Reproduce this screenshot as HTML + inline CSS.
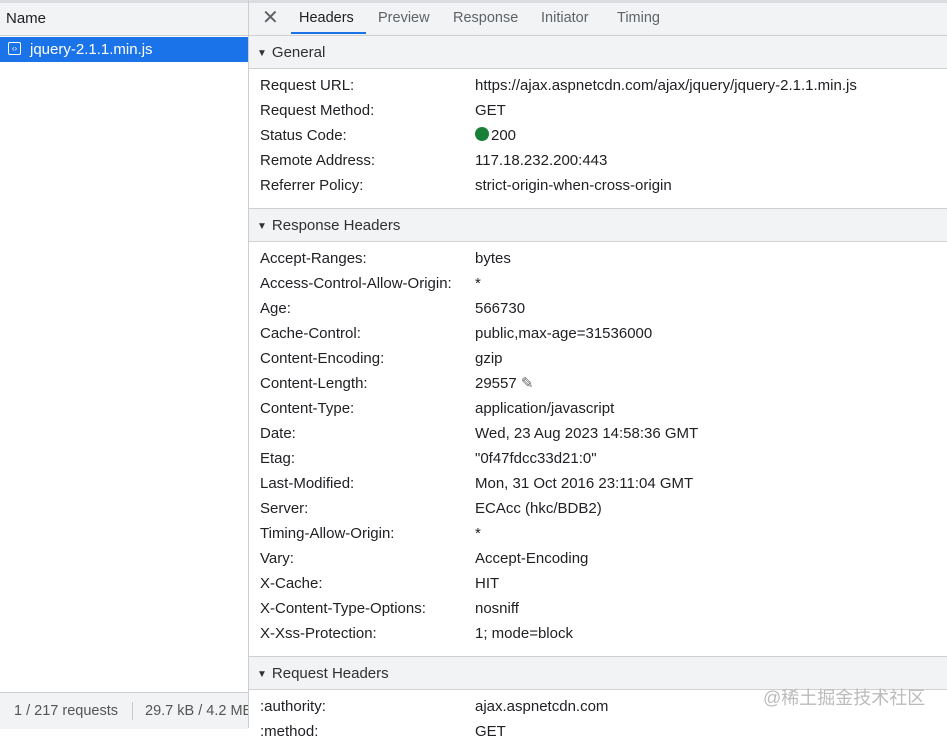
<!DOCTYPE html><html><head><style>
body{margin:0;width:947px;height:728px;overflow:hidden;font-family:"Liberation Sans",sans-serif;font-size:15px;color:#202124;background:#fff;position:relative}
.a{position:absolute}
.row{position:absolute;left:260px;height:25px;line-height:29px;white-space:nowrap}
.row span{position:absolute;left:215px}
.sec{position:absolute;left:249px;right:0;height:32px;background:#f1f3f4;border-top:1px solid #d0d0d0;border-bottom:1px solid #d0d0d0;line-height:33px;padding-left:8px;color:#303030}
.sec:before{content:"▼";font-size:10px;margin-right:5px;vertical-align:1px}
</style></head><body>
<div class="a" style="left:0;top:0;width:947px;height:3px;background:#dadce0"></div>
<div class="a" style="left:0;top:3px;width:248px;height:33px;background:#f1f3f4;border-bottom:1px solid #cbcdd1;line-height:32px;padding-left:6px;box-sizing:border-box;font-size:15px">Name</div>
<div class="a" style="left:0;top:37px;width:248px;height:25px;background:#1a73e8;color:#fff;line-height:25px;font-size:15px">
<span style="position:absolute;left:8px;top:5px;width:11px;height:11px;border:1.5px solid #fff;border-radius:2px;font-size:8px;line-height:11px;text-align:center">‹›</span>
<span style="position:absolute;left:30px">jquery-2.1.1.min.js</span></div>
<div class="a" style="left:248px;top:0;width:1px;height:728px;background:#cbcdd1"></div>
<div class="a" style="left:0;top:692px;width:248px;height:36px;border-top:1px solid #cbcdd1;background:#f1f3f4;line-height:36px;color:#555;font-size:14.5px;white-space:nowrap;overflow:hidden"><span style="margin-left:14px">1 / 217 requests</span><span style="display:inline-block;width:1px;height:18px;background:#ccc;vertical-align:middle;margin:0 12px 0 14px"></span>29.7 kB / 4.2 MB</div>
<div class="a" style="left:249px;top:3px;right:0;height:32px;background:#f1f3f4;border-bottom:1px solid #cbcdd1;line-height:31px;color:#5f6368;font-size:14.5px">
<span class="a" style="left:13px;font-size:20px;top:0">✕</span>
<span class="a" style="left:50px;color:#202124">Headers</span>
<span class="a" style="left:42px;top:29px;width:75px;height:2px;background:#1a73e8"></span>
<span class="a" style="left:129px">Preview</span><span class="a" style="left:204px">Response</span><span class="a" style="left:292px">Initiator</span><span class="a" style="left:368px">Timing</span></div>
<div class="sec" style="top:35px">General</div>
<div class="row" style="top:71px">Request URL:<span>https://ajax.aspnetcdn.com/ajax/jquery/jquery-2.1.1.min.js</span></div>
<div class="row" style="top:96px">Request Method:<span>GET</span></div>
<div class="row" style="top:121px">Status Code:<span><i style="display:inline-block;width:14px;height:14px;border-radius:50%;background:#188038;vertical-align:-1px;margin-right:2px"></i>200</span></div>
<div class="row" style="top:146px">Remote Address:<span>117.18.232.200:443</span></div>
<div class="row" style="top:171px">Referrer Policy:<span>strict-origin-when-cross-origin</span></div>
<div class="sec" style="top:208px">Response Headers</div>
<div class="row" style="top:244px">Accept-Ranges:<span>bytes</span></div>
<div class="row" style="top:269px">Access-Control-Allow-Origin:<span>*</span></div>
<div class="row" style="top:294px">Age:<span>566730</span></div>
<div class="row" style="top:319px">Cache-Control:<span>public,max-age=31536000</span></div>
<div class="row" style="top:344px">Content-Encoding:<span>gzip</span></div>
<div class="row" style="top:369px">Content-Length:<span>29557 <b style="color:#666;font-weight:normal">✎</b></span></div>
<div class="row" style="top:394px">Content-Type:<span>application/javascript</span></div>
<div class="row" style="top:419px">Date:<span>Wed, 23 Aug 2023 14:58:36 GMT</span></div>
<div class="row" style="top:444px">Etag:<span>"0f47fdcc33d21:0"</span></div>
<div class="row" style="top:469px">Last-Modified:<span>Mon, 31 Oct 2016 23:11:04 GMT</span></div>
<div class="row" style="top:494px">Server:<span>ECAcc (hkc/BDB2)</span></div>
<div class="row" style="top:519px">Timing-Allow-Origin:<span>*</span></div>
<div class="row" style="top:544px">Vary:<span>Accept-Encoding</span></div>
<div class="row" style="top:569px">X-Cache:<span>HIT</span></div>
<div class="row" style="top:594px">X-Content-Type-Options:<span>nosniff</span></div>
<div class="row" style="top:619px">X-Xss-Protection:<span>1; mode=block</span></div>
<div class="sec" style="top:656px">Request Headers</div>
<div class="row" style="top:692px">:authority:<span>ajax.aspnetcdn.com</span></div>
<div class="row" style="top:717px">:method:<span>GET</span></div>
<div class="a" style="left:763px;top:684px;color:#bbb;font-size:18px;font-family:'Liberation Sans','Noto Sans CJK SC',sans-serif">@稀土掘金技术社区</div>
</body></html>
